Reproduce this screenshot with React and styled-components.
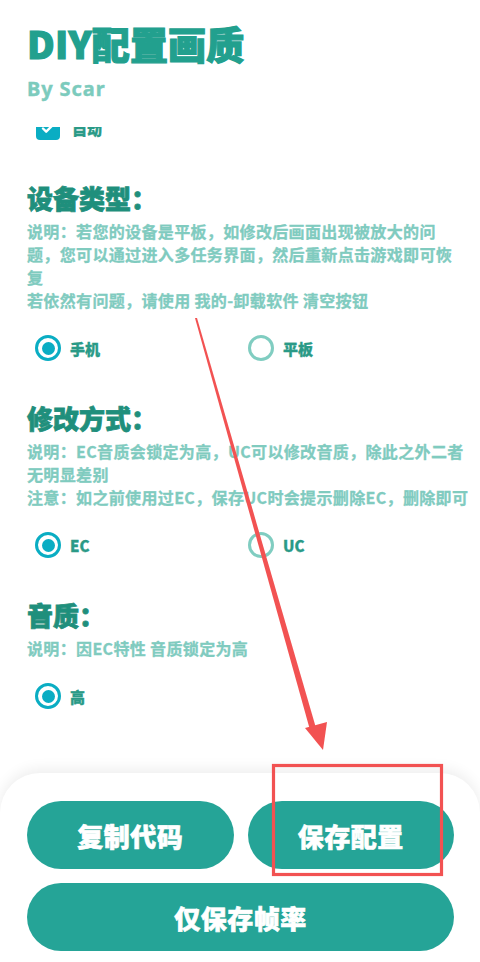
import React, { useState } from 'react';
import styled, { createGlobalStyle } from 'styled-components';

const GlobalStyle = createGlobalStyle`
  html, body {
    margin: 0;
    padding: 0;
    background: #ffffff;
  }
  body {
    font-family: "Noto Sans CJK SC", "Noto Sans", sans-serif;
  }
`;

const sections = [
  {
    key: 'device',
    title: '设备类型：',
    lines: [
      '说明：若您的设备是平板，如修改后画面出现被放大的问',
      '题，您可以通过进入多任务界面，然后重新点击游戏即可恢',
      '复',
      '若依然有问题，请使用 我的-卸载软件 清空按钮',
    ],
    options: ['手机', '平板'],
  },
  {
    key: 'mode',
    title: '修改方式：',
    lines: [
      '说明：EC音质会锁定为高，UC可以修改音质，除此之外二者',
      '无明显差别',
      '注意：如之前使用过EC，保存UC时会提示删除EC，删除即可',
    ],
    options: ['EC', 'UC'],
  },
  {
    key: 'sound',
    title: '音质：',
    lines: ['说明：因EC特性 音质锁定为高'],
    options: ['高'],
  },
];

export default function App() {
  const [picked, setPicked] = useState({ device: 0, mode: 0, sound: 0 });

  return (
    <>
      <GlobalStyle />
      <Page>
        <Header>
          <Title>DIY配置画质</Title>
          <Author>By Scar</Author>
        </Header>

        <ScrollArea>
          <ScrollContent>
            <CheckRow>
              <CheckBox>
                <svg width="16" height="16" viewBox="0 0 16 16">
                  <path d="M3 8.5l3.2 3.2L13 4.8" fill="none" stroke="#fff" strokeWidth="2.4" strokeLinecap="round" strokeLinejoin="round" />
                </svg>
              </CheckBox>
              <OptionLabel>自动</OptionLabel>
            </CheckRow>

            {sections.map((s) => (
              <Section key={s.key}>
                <Heading>{s.title}</Heading>
                <Desc>
                  {s.lines.map((l, i) => (
                    <React.Fragment key={i}>
                      {l}
                      {i < s.lines.length - 1 && <br />}
                    </React.Fragment>
                  ))}
                </Desc>
                <RadioRow>
                  {s.options.map((o, i) => (
                    <RadioOption key={o} onClick={() => setPicked({ ...picked, [s.key]: i })}>
                      <RadioCircle $checked={picked[s.key] === i} />
                      <OptionLabel>{o}</OptionLabel>
                    </RadioOption>
                  ))}
                </RadioRow>
              </Section>
            ))}
          </ScrollContent>
        </ScrollArea>

        <BottomPanel>
          <ButtonRow>
            <ActionButton>复制代码</ActionButton>
            <ActionButton>保存配置</ActionButton>
          </ButtonRow>
          <ActionButton>仅保存帧率</ActionButton>
        </BottomPanel>

        {/* red markup drawn over the screenshot */}
        <Annotation width="480" height="962" viewBox="0 0 480 962">
          <polygon points="195,318 197,318 316,728 310,730" fill="#f25252" />
          <polygon points="305,728 327,722 323,750" fill="#f25252" />
          <rect x="273.5" y="765.5" width="168" height="109" fill="none" stroke="#f25252" strokeWidth="3.2" />
        </Annotation>
      </Page>
    </>
  );
}

const Page = styled.div`
  position: relative;
  height: 962px;
  display: flex;
  flex-direction: column;
  overflow: hidden;
  background: #ffffff;
`;

const Header = styled.div`
  display: flex;
  flex-direction: column;
  padding: 19px 27px 24px;
  flex-shrink: 0;
`;

const Title = styled.div`
  font-size: 38px;
  line-height: 48px;
  font-weight: 900;
  color: #22a08e;
  -webkit-text-stroke: 1.2px #22a08e;
  letter-spacing: 0.2px;
`;

const Author = styled.div`
  margin-top: 8px;
  font-family: "Noto Sans", "Open Sans", sans-serif;
  font-size: 20px;
  line-height: 28px;
  font-weight: 700;
  letter-spacing: 0.9px;
  color: #7ccbbd;
  -webkit-text-stroke: 0.4px #7ccbbd;
`;

const ScrollArea = styled.div`
  flex: 1;
  overflow: hidden;
`;

const ScrollContent = styled.div`
  margin-top: -23px;
  padding: 0 24px 0 27px;
  display: flex;
  flex-direction: column;
  gap: 28px;
`;

const CheckRow = styled.div`
  height: 48px;
  display: flex;
  align-items: center;
  padding-left: 9px;
  gap: 12px;
`;

const CheckBox = styled.div`
  width: 24px;
  height: 24px;
  border-radius: 4px;
  background: #0aadc3;
  display: flex;
  align-items: center;
  justify-content: center;
`;

const Section = styled.div`
  display: flex;
  flex-direction: column;
`;

const Heading = styled.div`
  font-size: 26px;
  line-height: 36px;
  font-weight: 900;
  color: #1f8f7c;
  -webkit-text-stroke: 0.8px #1f8f7c;
  margin-bottom: 4px;
`;

const Desc = styled.div`
  font-size: 16px;
  line-height: 23px;
  font-weight: 700;
  letter-spacing: 0.35px;
  color: #80cbbf;
  -webkit-text-stroke: 0.3px #80cbbf;
  white-space: nowrap;
`;

const RadioRow = styled.div`
  margin-top: 12px;
  height: 48px;
  display: grid;
  grid-template-columns: 213px 1fr;
  align-items: center;
  padding-left: 8px;
`;

const RadioOption = styled.div`
  display: flex;
  align-items: center;
  gap: 9px;
  cursor: pointer;
`;

const RadioCircle = styled.div`
  box-sizing: border-box;
  width: 26px;
  height: 26px;
  border-radius: 50%;
  border: 3px solid ${(p) => (p.$checked ? '#0aadc3' : '#80cdc1')};
  display: flex;
  align-items: center;
  justify-content: center;

  &::after {
    content: '';
    width: 13px;
    height: 13px;
    border-radius: 50%;
    background: #0aadc3;
    display: ${(p) => (p.$checked ? 'block' : 'none')};
  }
`;

const OptionLabel = styled.span`
  font-size: 15px;
  font-weight: 800;
  color: #2a9a87;
  -webkit-text-stroke: 0.3px #2a9a87;
`;

const BottomPanel = styled.div`
  flex-shrink: 0;
  height: 189px;
  box-sizing: border-box;
  padding: 28px 26px 11px 27px;
  display: flex;
  flex-direction: column;
  gap: 14px;
  background: #ffffff;
  border-radius: 40px 40px 0 0;
  box-shadow: 0 -4px 14px rgba(0, 0, 0, 0.07);
`;

const ButtonRow = styled.div`
  display: grid;
  grid-template-columns: 1fr 1fr;
  gap: 14px;
`;

const ActionButton = styled.button`
  height: 68px;
  border: none;
  border-radius: 34px;
  background: #25a497;
  color: #ffffff;
  font-family: "Noto Sans CJK SC", sans-serif;
  font-size: 26px;
  font-weight: 900;
  letter-spacing: 0.5px;
  -webkit-text-stroke: 0.6px #ffffff;
  cursor: pointer;
  padding: 0;
`;

const Annotation = styled.svg`
  position: absolute;
  left: 0;
  top: 0;
  pointer-events: none;
`;
